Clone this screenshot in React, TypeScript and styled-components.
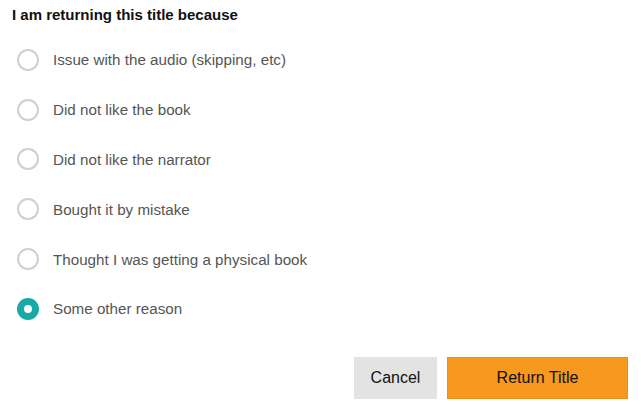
import React, { useState } from "react";
import styled, { createGlobalStyle } from "styled-components";

const GlobalStyle = createGlobalStyle`
  body {
    margin: 0;
    background: #ffffff;
    font-family: "Liberation Sans", Arial, sans-serif;
  }
`;

const reasons = [
  "Issue with the audio (skipping, etc)",
  "Did not like the book",
  "Did not like the narrator",
  "Bought it by mistake",
  "Thought I was getting a physical book",
  "Some other reason",
];

export default function App() {
  const [selected, setSelected] = useState(5);
  return (
    <>
      <GlobalStyle />
      <Container>
        <Title>I am returning this title because</Title>
        <ReasonList>
          {reasons.map((r, i) => (
            <ReasonRow key={r} onClick={() => setSelected(i)}>
              <Radio checked={selected === i} />
              <ReasonLabel>{r}</ReasonLabel>
            </ReasonRow>
          ))}
        </ReasonList>
        <Actions>
          <CancelButton>Cancel</CancelButton>
          <ReturnButton>Return Title</ReturnButton>
        </Actions>
      </Container>
    </>
  );
}

const Container = styled.div`
  width: 641px;
  height: 404px;
  box-sizing: border-box;
  padding: 5px 13px 5px 12px;
  display: flex;
  flex-direction: column;
`;

const Title = styled.h3`
  margin: 0;
  font-size: 15px;
  line-height: 20px;
  font-weight: bold;
  color: #111;
`;

const ReasonList = styled.div`
  margin-top: 10px;
  padding-left: 5px;
  display: flex;
  flex-direction: column;
`;

const ReasonRow = styled.label`
  height: 49.8px;
  display: flex;
  align-items: center;
  cursor: pointer;
`;

const Radio = styled.span<{ checked: boolean }>`
  width: 22px;
  height: 22px;
  box-sizing: border-box;
  border-radius: 50%;
  border: 2px solid ${(p) => (p.checked ? "#17aaa6" : "#cfcfcf")};
  background: ${(p) => (p.checked ? "#17aaa6" : "#fff")};
  display: flex;
  align-items: center;
  justify-content: center;
  margin-right: 14px;
  &::after {
    content: "";
    display: ${(p) => (p.checked ? "block" : "none")};
    width: 8px;
    height: 8px;
    border-radius: 50%;
    background: #fff;
  }
`;

const ReasonLabel = styled.span`
  font-size: 15.2px;
  color: #555;
`;

const Actions = styled.div`
  margin-top: auto;
  display: flex;
  justify-content: flex-end;
  gap: 10px;
`;

const CancelButton = styled.button`
  width: 83px;
  height: 42px;
  border: none;
  background: #e3e3e3;
  font-family: "Liberation Sans", Arial, sans-serif;
  font-size: 16px;
  color: #111;
  cursor: pointer;
`;

const ReturnButton = styled.button`
  width: 181px;
  height: 42px;
  box-sizing: border-box;
  border: 1px solid #ee8e18;
  background: #f7981f;
  font-family: "Liberation Sans", Arial, sans-serif;
  font-size: 16px;
  color: #111;
  cursor: pointer;
`;
